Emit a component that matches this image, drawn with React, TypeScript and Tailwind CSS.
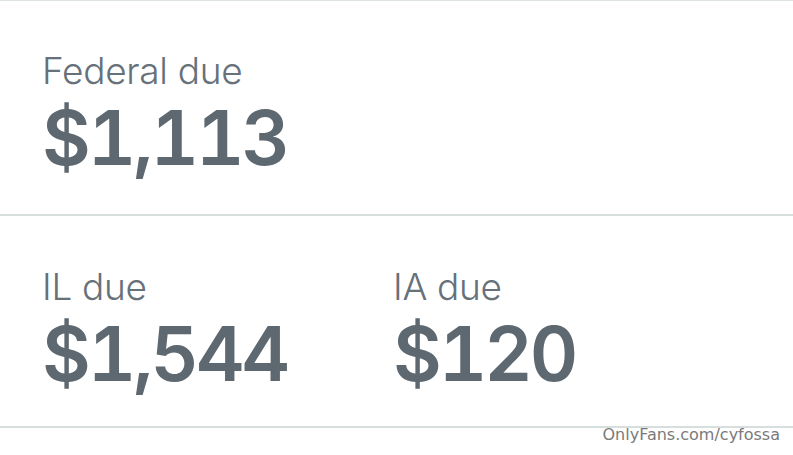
import React from "react";

interface DueItem {
  label: string;
  amount: string;
}

const FEDERAL: DueItem = { label: "Federal due", amount: "$1,113" };

const STATES: DueItem[] = [
  { label: "IL due", amount: "$1,544" },
  { label: "IA due", amount: "$120" },
];

function DueBlock({ item }: { item: DueItem }) {
  return (
    <div className="flex flex-col">
      <div className="text-[37px] leading-none font-light text-[#66717a] tracking-[-0.3px]">
        {item.label}
      </div>
      <div className="mt-[11px] text-[75px] leading-none font-semibold text-[#5d6870] tabular-nums tracking-[-3px]">
        {item.amount}
      </div>
    </div>
  );
}

export default function App() {
  return (
    <div className="relative h-[455px] w-full bg-white overflow-hidden font-['Inter',sans-serif]">
      {/* Federal section */}
      <div className="h-[214px] border-t border-[#dde3e3] px-[42px] pt-[51px]">
        <DueBlock item={FEDERAL} />
      </div>

      {/* State sections */}
      <div className="h-[214px] border-t-2 border-b-2 border-[#d7dede] px-[42px] pt-[52px] flex">
        {STATES.map((s) => (
          <div key={s.label} className="w-[351px] shrink-0">
            <DueBlock item={s} />
          </div>
        ))}
      </div>

      {/* Watermark */}
      <div className="absolute right-[13px] top-[423px] text-[16px] text-[#7a7a7a] font-['DejaVu_Sans',sans-serif]">
        OnlyFans.com/cyfossa
      </div>
    </div>
  );
}
